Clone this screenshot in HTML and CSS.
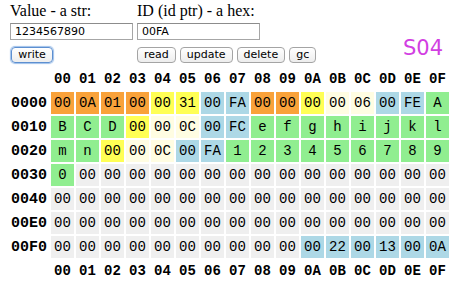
FILE: index.html
```html
<!DOCTYPE html>
<html lang="en">
<head>
  <meta charset="UTF-8" />
  <title>Heap viewer</title>
  <link rel="stylesheet" href="styles.css">
</head>

<body>
  <div class="controls">
    <div class="field">
      <label for="value">Value - a str:</label>
      <input id="value" type="text" value="1234567890">
      <div class="buttons">
        <button class="primary">write</button>
      </div>
    </div>

    <div class="field">
      <label for="ptr">ID (id ptr) - a hex:</label>
      <input id="ptr" type="text" value="00FA">
      <div class="buttons">
        <button>read</button>
        <button>update</button>
        <button>delete</button>
        <button>gc</button>
      </div>
    </div>

    <div class="slot">S04</div>
  </div>

  <table id="dump" class="dump"></table>

  <script>
    const cols = ["00","01","02","03","04","05","06","07","08","09","0A","0B","0C","0D","0E","0F"];
    const colours = { o: "orange", y: "yellow", l: "cream", b: "blue", g: "green", z: "empty" };

    // first letter of each cell = colour, rest = text
    const rows = [
      ["0000", "o00 o0A o01 o00 y00 y31 b00 bFA o00 o00 y00 l00 l06 b00 bFE gA"],
      ["0010", "gB gC gD y00 l00 l0C b00 bFC ge gf gg gh gi gj gk gl"],
      ["0020", "gm gn y00 l00 l0C b00 bFA g1 g2 g3 g4 g5 g6 g7 g8 g9"],
      ["0030", "g0 z00 z00 z00 z00 z00 z00 z00 z00 z00 z00 z00 z00 z00 z00 z00"],
      ["0040", "z00 z00 z00 z00 z00 z00 z00 z00 z00 z00 z00 z00 z00 z00 z00 z00"],
      ["00E0", "z00 z00 z00 z00 z00 z00 z00 z00 z00 z00 z00 z00 z00 z00 z00 z00"],
      ["00F0", "z00 z00 z00 z00 z00 z00 z00 z00 z00 z00 b00 b22 b00 b13 b00 b0A"]
    ];

    const table = document.getElementById("dump");

    function addHeader() {
      const tr = table.insertRow();
      tr.className = "head";
      tr.insertCell().className = "addr";
      cols.forEach(c => {
        const td = tr.insertCell();
        td.innerText = c;
      });
    }

    addHeader();

    rows.forEach(([addr, cells]) => {
      const tr = table.insertRow();
      const th = tr.insertCell();
      th.className = "addr";
      th.innerText = addr;

      cells.split(" ").forEach(cell => {
        const td = tr.insertCell();
        td.className = "byte " + colours[cell[0]];
        td.innerText = cell.slice(1);
      });
    });

    addHeader();
  </script>
</body>
</html>
```

FILE: styles.css
```css
body {
  margin: 0;
  padding: 0 8px;
  background: #fff;
  color: #000;
  font-family: "Liberation Serif", serif;
}

.controls {
  display: flex;
  gap: 4px;
  padding-top: 2px;
  padding-left: 2px;
}

.field {
  display: flex;
  flex-direction: column;
  width: 123px;
}

.field label {
  font-size: 16px;
  line-height: 18px;
  white-space: nowrap;
}

.field input {
  margin-top: 3px;
  box-sizing: border-box;
  width: 123px;
  height: 17px;
  padding: 0 4px;
  border: 1px solid #a6a6a6;
  border-top-color: #8c8c8c;
  font-family: "DejaVu Sans", sans-serif;
  font-size: 11px;
  color: #000;
}

.buttons {
  display: flex;
  gap: 4px;
  margin-top: 7px;
}

button {
  box-sizing: border-box;
  height: 16px;
  padding: 0 6px;
  border: 1px solid #a4a4a4;
  border-radius: 4px;
  background: linear-gradient(#ffffff, #ededed);
  font-family: "DejaVu Sans", sans-serif;
  font-size: 11px;
  line-height: 14px;
  color: #000;
}

button.primary {
  margin-left: 1px;
  width: 42px;
  border-color: #5d8fd0;
  box-shadow: 0 0 1px 1px #9ec0ea;
}

.slot {
  margin-left: auto;
  margin-right: 19px;
  margin-top: 34px;
  font-family: "DejaVu Sans", sans-serif;
  font-size: 21px;
  color: #d23fe2;
}

.dump {
  margin-top: 3px;
  border-spacing: 2px;
  font-family: "Liberation Mono", monospace;
  font-size: 14px;
}

.dump td {
  width: 23px;
  height: 22px;
  padding: 0;
  text-align: center;
  white-space: nowrap;
}

.dump .head td {
  font-weight: bold;
}

.dump td.addr {
  width: 37px;
  padding-right: 2px;
  text-align: right;
  font-weight: bold;
  font-size: 15px;
}

.orange { background: #f9a23a; }
.yellow { background: #ffff55; }
.cream  { background: #fffde2; }
.blue   { background: #add8e6; }
.green  { background: #90ee90; }
.empty  { background: #efefef; }
```
